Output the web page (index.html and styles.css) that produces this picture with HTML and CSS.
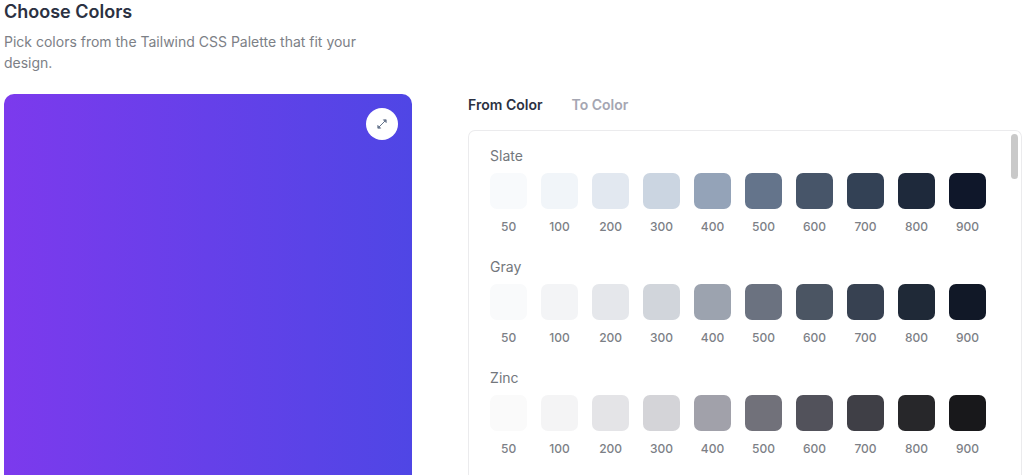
FILE: index.html
```html
<!DOCTYPE html>
<html lang="en">
<head>
<meta charset="utf-8">
<meta name="viewport" content="width=device-width, initial-scale=1">
<title>Choose Colors</title>
<link rel="stylesheet" href="styles.css">
</head>
<body>
<main class="page">
  <section class="intro">
    <h1 class="title">Choose Colors</h1>
    <p class="lead">Pick colors from the Tailwind CSS Palette that fit your design.</p>
    <div class="preview">
      <button class="expand" type="button" aria-label="Expand preview">
        <svg class="expand-icon" viewBox="0 0 12 12" aria-hidden="true">
          <path d="M3 9 9 3" fill="none" stroke="currentColor" stroke-width="1"/>
          <path d="M7.4 1.8h2.8v2.8zM1.8 7.4v2.8h2.8z" fill="currentColor" stroke="currentColor" stroke-width=".8" stroke-linejoin="round"/>
        </svg>
      </button>
    </div>
  </section>
  <section class="picker">
    <div class="tabs" role="tablist">
      <button class="tab tab-active" type="button" role="tab" aria-selected="true">From Color</button>
      <button class="tab" type="button" role="tab" aria-selected="false">To Color</button>
    </div>
    <div class="panel" role="tabpanel">
      <section class="family">
        <h2 class="family-name">Slate</h2>
        <div class="shades">
          <button class="shade" type="button"><span class="chip" style="background:#f8fafc"></span>50</button>
          <button class="shade" type="button"><span class="chip" style="background:#f1f5f9"></span>100</button>
          <button class="shade" type="button"><span class="chip" style="background:#e2e8f0"></span>200</button>
          <button class="shade" type="button"><span class="chip" style="background:#cbd5e1"></span>300</button>
          <button class="shade" type="button"><span class="chip" style="background:#94a3b8"></span>400</button>
          <button class="shade" type="button"><span class="chip" style="background:#64748b"></span>500</button>
          <button class="shade" type="button"><span class="chip" style="background:#475569"></span>600</button>
          <button class="shade" type="button"><span class="chip" style="background:#334155"></span>700</button>
          <button class="shade" type="button"><span class="chip" style="background:#1e293b"></span>800</button>
          <button class="shade" type="button"><span class="chip" style="background:#0f172a"></span>900</button>
        </div>
      </section>
      <section class="family">
        <h2 class="family-name">Gray</h2>
        <div class="shades">
          <button class="shade" type="button"><span class="chip" style="background:#f9fafb"></span>50</button>
          <button class="shade" type="button"><span class="chip" style="background:#f3f4f6"></span>100</button>
          <button class="shade" type="button"><span class="chip" style="background:#e5e7eb"></span>200</button>
          <button class="shade" type="button"><span class="chip" style="background:#d1d5db"></span>300</button>
          <button class="shade" type="button"><span class="chip" style="background:#9ca3af"></span>400</button>
          <button class="shade" type="button"><span class="chip" style="background:#6b7280"></span>500</button>
          <button class="shade" type="button"><span class="chip" style="background:#4b5563"></span>600</button>
          <button class="shade" type="button"><span class="chip" style="background:#374151"></span>700</button>
          <button class="shade" type="button"><span class="chip" style="background:#1f2937"></span>800</button>
          <button class="shade" type="button"><span class="chip" style="background:#111827"></span>900</button>
        </div>
      </section>
      <section class="family">
        <h2 class="family-name">Zinc</h2>
        <div class="shades">
          <button class="shade" type="button"><span class="chip" style="background:#fafafa"></span>50</button>
          <button class="shade" type="button"><span class="chip" style="background:#f4f4f5"></span>100</button>
          <button class="shade" type="button"><span class="chip" style="background:#e4e4e7"></span>200</button>
          <button class="shade" type="button"><span class="chip" style="background:#d4d4d8"></span>300</button>
          <button class="shade" type="button"><span class="chip" style="background:#a1a1aa"></span>400</button>
          <button class="shade" type="button"><span class="chip" style="background:#71717a"></span>500</button>
          <button class="shade" type="button"><span class="chip" style="background:#52525b"></span>600</button>
          <button class="shade" type="button"><span class="chip" style="background:#3f3f46"></span>700</button>
          <button class="shade" type="button"><span class="chip" style="background:#27272a"></span>800</button>
          <button class="shade" type="button"><span class="chip" style="background:#18181b"></span>900</button>
        </div>
      </section>
      <div class="scroll-thumb" aria-hidden="true"></div>
    </div>
  </section>
</main>
</body>
</html>
```
FILE: styles.css
```css
* {
  box-sizing: border-box;
}

body {
  margin: 0;
  background: #fff;
  color: #73777c;
  font-family: Inter, "Liberation Sans", sans-serif;
}

h1, h2, p {
  margin: 0;
}

button {
  padding: 0;
  border: 0;
  background: none;
  color: inherit;
  font: inherit;
  cursor: pointer;
}

.page {
  display: grid;
  grid-template-columns: 14fr 19fr;
  gap: 56px;
  min-height: 100vh;
  padding: 0 2px 0 4px;
}

.intro,
.picker {
  display: flex;
  flex-direction: column;
  min-width: 0;
}

.title {
  color: #2b3142;
  font-size: 18px;
  font-weight: 600;
  line-height: 24px;
}

.lead {
  margin: 7px 0 21px;
  max-width: 380px;
  color: #7c8086;
  font-size: 14px;
  line-height: 21px;
}

.preview {
  display: flex;
  flex: 1;
  justify-content: flex-end;
  align-items: flex-start;
  padding: 14px;
  border-radius: 10px 10px 0 0;
  background: linear-gradient(to right, #7c3aed, #4f46e5);
}

.expand {
  display: grid;
  place-items: center;
  width: 32px;
  height: 32px;
  border-radius: 50%;
  background: #fff;
  color: #64748b;
}

.expand-icon {
  width: 12px;
  height: 12px;
}

.picker {
  padding-top: 94px;
}

.tabs {
  display: flex;
  gap: 29px;
  padding-bottom: 15px;
}

.tab {
  color: #a5a6b2;
  font-size: 14px;
  font-weight: 600;
  line-height: 21px;
}

.tab-active {
  color: #2b3142;
}

.panel {
  position: relative;
  display: flex;
  flex: 1;
  flex-direction: column;
  gap: 21px;
  padding: 15px 35px 0 21px;
  border: 1px solid #ebebed;
  border-bottom: 0;
  border-radius: 7px 7px 0 0;
}

.family-name {
  margin-bottom: 7px;
  font-size: 14px;
  font-weight: 400;
  line-height: 20px;
}

.shades {
  display: grid;
  grid-template-columns: repeat(10, 1fr);
  gap: 14px;
}

.shade {
  display: flex;
  flex-direction: column;
  align-items: center;
  gap: 9px;
  color: #7c8086;
  font-size: 12px;
  font-weight: 500;
  line-height: 18px;
}

.chip {
  width: 100%;
  height: 36px;
  border-radius: 7px;
}

.scroll-thumb {
  position: absolute;
  top: 3px;
  right: 3px;
  width: 7px;
  height: 45px;
  border-radius: 4px;
  background: #c9c9c9;
}
```
